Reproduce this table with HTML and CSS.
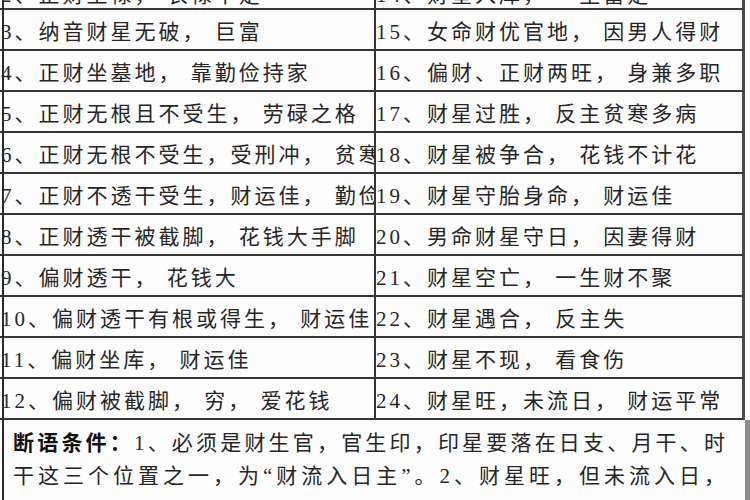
FILE: index.html
```html
<!DOCTYPE html>
<html lang="zh-CN">
<head>
<meta charset="utf-8">
<title>财星断语</title>
<link rel="stylesheet" href="styles.css">
</head>
<body>
<div class="sheet">
  <div class="table">
    <div class="row row-partial"><div class="cell left">2、正财坐禄， 衣禄丰足</div><div class="cell right">14、财星入库， 一生富足</div></div>
    <div class="row"><div class="cell left">3、纳音财星无破， 巨富</div><div class="cell right">15、女命财优官地， 因男人得财</div></div>
    <div class="row"><div class="cell left">4、正财坐墓地， 靠勤俭持家</div><div class="cell right">16、偏财、正财两旺， 身兼多职</div></div>
    <div class="row"><div class="cell left">5、正财无根且不受生， 劳碌之格</div><div class="cell right">17、财星过胜， 反主贫寒多病</div></div>
    <div class="row"><div class="cell left">6、正财无根不受生，受刑冲， 贫寒</div><div class="cell right">18、财星被争合， 花钱不计花</div></div>
    <div class="row"><div class="cell left">7、正财不透干受生，财运佳， 勤俭持家</div><div class="cell right">19、财星守胎身命， 财运佳</div></div>
    <div class="row"><div class="cell left">8、正财透干被截脚， 花钱大手脚</div><div class="cell right">20、男命财星守日， 因妻得财</div></div>
    <div class="row"><div class="cell left">9、偏财透干， 花钱大</div><div class="cell right">21、财星空亡， 一生财不聚</div></div>
    <div class="row"><div class="cell left">10、偏财透干有根或得生， 财运佳</div><div class="cell right">22、财星遇合， 反主失</div></div>
    <div class="row"><div class="cell left">11、偏财坐库， 财运佳</div><div class="cell right">23、财星不现， 看食伤</div></div>
    <div class="row"><div class="cell left">12、偏财被截脚， 穷， 爱花钱</div><div class="cell right">24、财星旺，未流日， 财运平常</div></div>
  </div>
  <div class="note">
    <div class="line"><span class="lead">断语条件：</span>1、必须是财生官，官生印，印星要落在日支、月干、时</div>
    <div class="line">干这三个位置之一，为“财流入日主”。2、财星旺，但未流入日，</div>
  </div>
</div>
</body>
</html>
```

FILE: styles.css
```css
html, body {
  margin: 0;
  padding: 0;
  background: #ffffff;
}

body {
  width: 750px;
  height: 500px;
  overflow: hidden;
  font-family: "Liberation Serif", "Noto Sans CJK SC", serif;
  color: #262626;
}

.sheet {
  position: relative;
  width: 750px;
  height: 500px;
  overflow: hidden;
}

.sheet::before {
  content: "";
  position: absolute;
  left: 2px;
  top: 0;
  bottom: 0;
  width: 2px;
  background: #2a2a2a;
  z-index: 2;
}

.table {
  margin-top: -31px;
  width: 745px;
}

.row {
  display: grid;
  grid-template-columns: 376px 369px;
  height: 41px;
}

.cell {
  box-sizing: border-box;
  height: 41px;
  border-bottom: 2px solid #363636;
  padding-top: 5px;
  line-height: 34px;
  font-size: 21px;
  letter-spacing: 3px;
  word-spacing: 0;
  white-space: nowrap;
  overflow: hidden;
  background: #fdfdfd;
}

.row-partial .cell {
  padding-top: 9px;
}

.left {
  padding-left: 1px;
  border-right: 2px solid #363636;
}

.right {
  padding-left: 0;
  border-right: 3px solid #4a4a4a;
}

.note {
  box-sizing: border-box;
  width: 750px;
  padding: 7px 20px 0 13px;
  border-right: 5px solid #8c8c8c;
  height: 100px;
  font-size: 21px;
  line-height: 33px;
  background: #fdfdfd;
}

.line {
  text-align: justify;
  text-align-last: justify;
  white-space: nowrap;
}

.lead {
  font-weight: 700;
  color: #111111;
}
```
